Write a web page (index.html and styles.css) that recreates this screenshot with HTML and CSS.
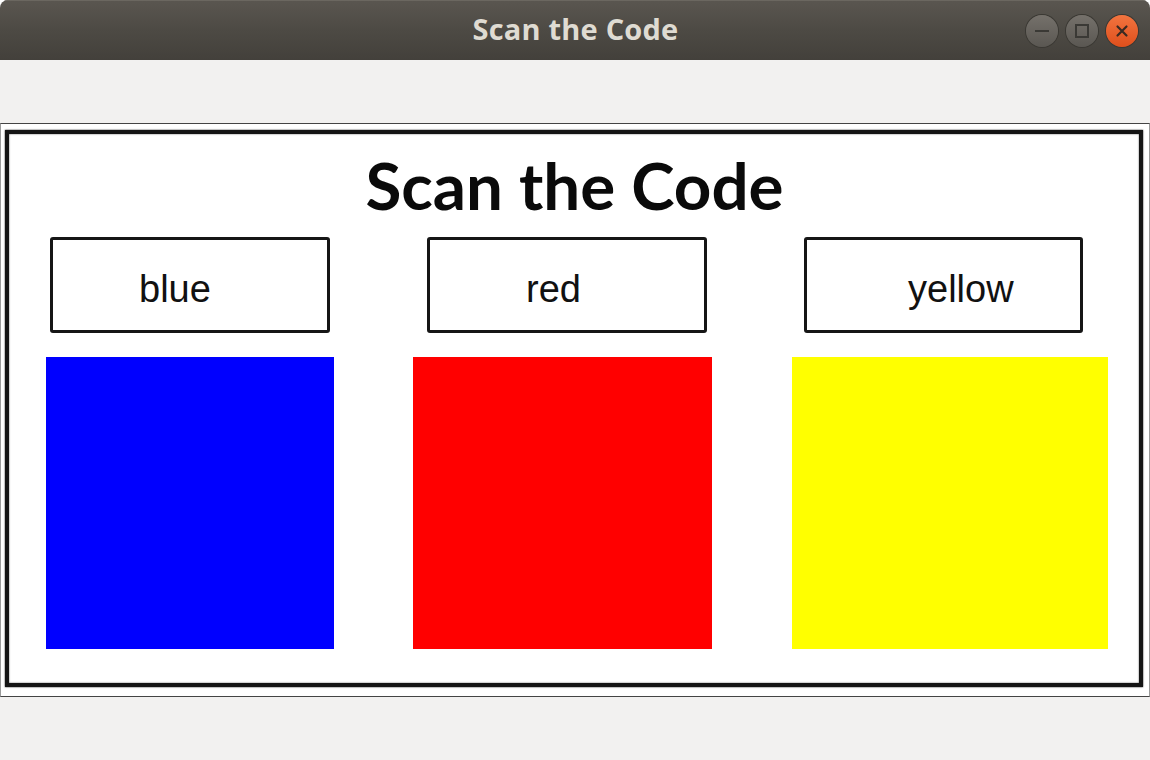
FILE: index.html
```html
<!DOCTYPE html>
<html lang="en">
<head>
<meta charset="utf-8">
<title>Scan the Code</title>
<link rel="stylesheet" href="styles.css">
</head>
<body>
<div class="window">
  <header class="titlebar">
    <div class="spacer"></div>
    <span class="title">Scan the Code</span>
    <div class="controls">
      <span class="btn btn-min"><svg width="32" height="32" viewBox="0 0 32 32"><line x1="9" y1="16" x2="23" y2="16" stroke="#3a3935" stroke-width="2"/></svg></span>
      <span class="btn btn-max"><svg width="32" height="32" viewBox="0 0 32 32"><rect x="10" y="10" width="12" height="12" fill="none" stroke="#3a3935" stroke-width="2"/></svg></span>
      <span class="btn btn-close"><svg width="32" height="32" viewBox="0 0 32 32"><path d="M11.5 11.5 L20.5 20.5 M20.5 11.5 L11.5 20.5" stroke="#3a2a22" stroke-width="2.2" stroke-linecap="round"/></svg></span>
    </div>
  </header>
  <main class="content">
    <div class="canvas">
      <div class="frame">
        <h1 class="heading">Scan the Code</h1>
        <div class="labels">
          <div class="label label-blue">blue</div>
          <div class="label label-red">red</div>
          <div class="label label-yellow">yellow</div>
        </div>
        <div class="swatches">
          <div class="swatch swatch-blue"></div>
          <div class="swatch swatch-red"></div>
          <div class="swatch swatch-yellow"></div>
        </div>
      </div>
    </div>
  </main>
</div>
</body>
</html>
```
FILE: styles.css
```css
* { box-sizing: border-box; }
html, body {
  margin: 0;
  padding: 0;
  background: #ffffff;
}
body {
  width: 1150px;
  height: 760px;
  overflow: hidden;
  font-family: "Liberation Sans", Arial, sans-serif;
}
.window {
  width: 1150px;
  height: 760px;
  background: #f2f1f0;
  border-radius: 8px 8px 0 0;
  overflow: hidden;
  display: flex;
  flex-direction: column;
}
.titlebar {
  height: 60px;
  flex: none;
  display: grid;
  grid-template-columns: 1fr auto 1fr;
  align-items: center;
  background: linear-gradient(#5a5650 0%, #4d4a44 50%, #43403b 100%);
  box-shadow: inset 0 1px 0 #6b6760;
}
.title {
  font-family: "Open Sans", "DejaVu Sans", sans-serif;
  font-weight: 700;
  font-size: 29px;
  color: #dfdbd2;
  letter-spacing: 0.2px;
  padding-left: 1px;
  margin-top: -3px;
}
.controls {
  justify-self: end;
  display: flex;
  gap: 8px;
  padding-right: 12px;
  padding-top: 1px;
}
.btn {
  width: 32px;
  height: 32px;
  border-radius: 50%;
  display: block;
  box-shadow: 0 0 0 1px #3a3833;
}
.btn svg { display: block; }
.btn-min, .btn-max {
  background: linear-gradient(#75716b, #5a5752);
}
.btn-close {
  background: linear-gradient(#f2743f, #df4f1c);
}
.content {
  flex: 1;
  padding-top: 63px;
}
.canvas {
  width: 1150px;
  height: 574px;
  background: #ffffff;
  border-top: 1px solid #444444;
  border-bottom: 1px solid #444444;
  border-left: 1px solid #9a9a9a;
  border-right: 1px solid #9a9a9a;
  padding: 6px 6px 0 4px;
}
.frame {
  height: 557px;
  border: 4px solid #141414;
  box-shadow: 0 0 1.5px #141414, inset 0 0 1.5px #141414;
  display: flex;
  flex-direction: column;
}
.heading {
  margin: 18px 0 0;
  font-family: Lato, "Open Sans", sans-serif;
  font-weight: 700;
  font-size: 65.5px;
  line-height: 66px;
  text-align: center;
  color: #0a0a0a;
  padding-left: 1px;
}
.labels {
  display: flex;
  gap: 97px;
  margin-top: 19px;
  padding-left: 41px;
}
.label {
  width: 280px;
  height: 96px;
  border: 3px solid #161616;
  border-radius: 3px;
  font-family: "Liberation Sans", Arial, sans-serif;
  font-size: 38px;
  line-height: 38px;
  color: #111111;
  padding-top: 30px;
}
.label-blue { padding-left: 86px; }
.label-red { padding-left: 96px; }
.label-yellow { padding-left: 101px; width: 279px; }
.swatches {
  display: flex;
  margin-top: 24px;
  padding-left: 37px;
}
.swatch { height: 292px; }
.swatch-blue { width: 288px; background: #0000ff; }
.swatch-red { width: 299px; background: #ff0000; margin-left: 79px; }
.swatch-yellow { width: 316px; background: #ffff00; margin-left: 80px; }
```
